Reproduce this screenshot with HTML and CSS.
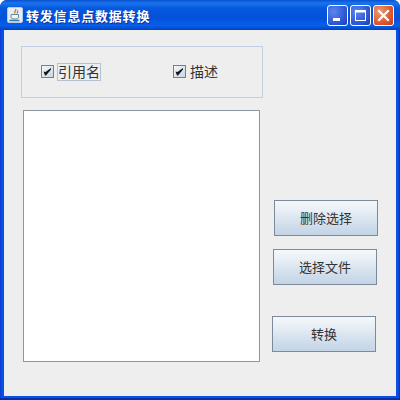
FILE: index.html
```html
<!DOCTYPE html>
<html lang="zh">
<head>
<meta charset="utf-8">
<title>转发信息点数据转换</title>
<link rel="stylesheet" href="styles.css">
</head>
<body>
<div class="window">
  <header class="titlebar">
    <div class="title-left">
      <svg class="app-icon" width="16" height="16" viewBox="0 0 16 16">
        <rect x="0.5" y="0.5" width="15" height="15" rx="1.5" fill="#e6ecf6" stroke="#b9c9e6"/>
        <path d="M8.500 2c1.500 1.500-2 2.500-.5 4.500M10.500 3.500c.8 1-.8 1.800 0 3" fill="none" stroke="#e0702a" stroke-width="1.300"/>
        <path d="M4 7.500h7.500v2.500c0 1.500-1.500 2-3.750 2S4 11.500 4 10z" fill="#f4f4f0" stroke="#5a8fa6"/>
        <path d="M2.500 13.500h10" stroke="#2f7f98" stroke-width="1.400"/>
      </svg>
      <span class="title-text">转发信息点数据转换</span>
    </div>
    <div class="controls">
      <div class="ctl ctl-blue">
        <svg width="19" height="19" viewBox="0 0 19 19"><rect x="5" y="12" width="7" height="3" fill="#fff"/></svg>
      </div>
      <div class="ctl ctl-blue">
        <svg width="19" height="19" viewBox="0 0 19 19"><rect x="4.500" y="4.500" width="10" height="10" fill="none" stroke="#fff"/><rect x="4" y="4" width="11" height="2.500" fill="#fff"/></svg>
      </div>
      <div class="ctl ctl-red">
        <svg width="19" height="19" viewBox="0 0 19 19"><path d="M5 5l9 9M14 5l-9 9" stroke="#fff" stroke-width="2.200" stroke-linecap="square"/></svg>
      </div>
    </div>
  </header>
  <main class="content">
    <div class="left">
      <section class="group">
        <label class="check check-first">
          <span class="box"><svg width="11" height="11" viewBox="0 0 11 11"><path d="M1.500 5.500l2 .5L9 2v1.500L4 9.500H3z" fill="#10181f"/></svg></span>
          <span class="check-label focused">引用名</span>
        </label>
        <label class="check">
          <span class="box"><svg width="11" height="11" viewBox="0 0 11 11"><path d="M1.500 5.500l2 .5L9 2v1.500L4 9.500H3z" fill="#10181f"/></svg></span>
          <span class="check-label">描述</span>
        </label>
      </section>
      <div class="list"></div>
    </div>
    <div class="right">
      <button class="btn btn-delete">删除选择</button>
      <button class="btn btn-choose">选择文件</button>
      <button class="btn btn-convert">转换</button>
    </div>
  </main>
</div>
</body>
</html>
```
FILE: styles.css
```css
* { box-sizing: border-box; }
html, body { margin: 0; padding: 0; }
body {
  width: 400px;
  height: 400px;
  overflow: hidden;
  font-family: "Noto Sans CJK SC", "Liberation Sans", sans-serif;
}
.window {
  width: 400px;
  height: 400px;
  display: flex;
  flex-direction: column;
  background: linear-gradient(90deg, #0a3ed0 0, #0a50e8 2px, #0a50e8 398px, #0530b0 400px);
  border-bottom: 2px solid #0530a8;
  border-radius: 7px 7px 0 0;
  overflow: hidden;
}
.titlebar {
  height: 30px;
  flex: none;
  display: flex;
  align-items: center;
  justify-content: space-between;
  padding: 0 6px 0 7px;
  background: linear-gradient(180deg, #0a50d0 0%, #1a74ee 10%, #0658de 28%, #0450da 60%, #0660ea 85%, #0340c0 100%);
}
.title-left { display: flex; align-items: center; gap: 3px; }
.app-icon { display: block; }
.title-text {
  color: #fff;
  font-size: 13px;
  font-weight: 700;
  letter-spacing: 0.8px;
  text-shadow: 1px 1px 0 #0a2f9a;
}
.controls { display: flex; gap: 2px; margin-top: 1px; }
.ctl {
  width: 21px;
  height: 21px;
  border: 1px solid #fff;
  border-radius: 3px;
}
.ctl svg { display: block; }
.ctl-blue { background: radial-gradient(circle at 30% 30%, #5b86ee, #2a52d2 70%, #1c3cb4); }
.ctl-red { background: radial-gradient(circle at 30% 30%, #ee9a78, #dc5a30 60%, #c03a18); }
.content {
  flex: 1;
  display: flex;
  margin: 0 4px 2px;
  background: #eeeeee;
}
.left {
  width: 268px;
  padding: 16px 0 0 17px;
  flex: none;
}
.group {
  width: 242px;
  height: 52px;
  border: 1px solid #c0d0e2;
  display: flex;
  align-items: center;
  padding: 0 0 1px 19px;
}
.check {
  display: flex;
  align-items: center;
  gap: 3px;
  font-size: 14px;
  font-weight: 400;
  color: #333;
}
.check-first { width: 132px; }
.box {
  width: 13px;
  height: 13px;
  border: 1px solid #6f8296;
  background: linear-gradient(135deg, #f4f6f9, #c9d6e6);
  display: flex;
  align-items: center;
  justify-content: center;
}
.box svg { display: block; }
.check-label {
  line-height: 15px;
  height: 18px;
  padding: 0;
  border: 1px solid transparent;
}
.check-label.focused { border-color: #b4c2d2; }
.list {
  width: 237px;
  height: 252px;
  margin: 12px 0 0 2px;
  background: #fff;
  border: 1px solid #8e979f;
}
.right {
  flex: none;
  display: flex;
  flex-direction: column;
  align-items: flex-start;
}
.btn {
  width: 104px;
  height: 36px;
  padding: 0 0 2px;
  border: 1px solid #7d8a99;
  background: linear-gradient(180deg, #f4f8fb 0%, #eaf0f6 25%, #d6e2ee 60%, #c2d4e6 100%);
  font-family: inherit;
  font-size: 13px;
  font-weight: 400;
  color: #333;
}
.btn-delete { margin: 170px 0 0 2px; }
.btn-choose { margin: 13px 0 0 1px; }
.btn-convert { margin: 31px 0 0 0; }
```
